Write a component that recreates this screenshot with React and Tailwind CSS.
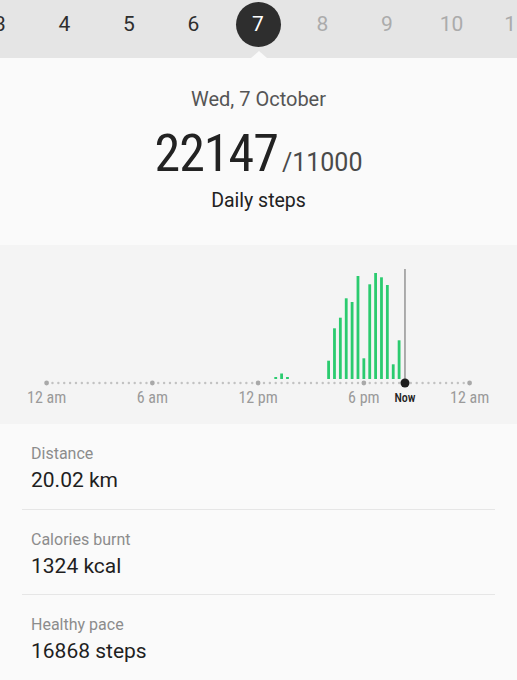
import React from "react";

const days = [3, 4, 5, 6, 7, 8, 9, 10, 11];
const today = 7;

// 20-minute slots, index -> top y of bar (chart coords, bottom = 134)
const bars = [
    [39, 132],
    [40, 128.5],
    [41, 132],
    [48, 115.7],
    [49, 83.3],
    [50, 72.7],
    [51, 53.3],
    [52, 57],
    [53, 31],
    [54, 113.3],
    [55, 39.3],
    [56, 28],
    [57, 32.3],
    [58, 40],
    [59, 119.3],
    [60, 95.3],
];

const slotX = (i) => 46.6 + i * 5.875;
const AXIS_Y = 138;
const NOW = 61;

const stats = [
    { label: "Distance", value: "20.02 km" },
    { label: "Calories burnt", value: "1324 kcal" },
    { label: "Healthy pace", value: "16868 steps" },
];

const axisLabels = [
    { i: 0, text: "12 am" },
    { i: 18, text: "6 am" },
    { i: 36, text: "12 pm" },
    { i: 54, text: "6 pm" },
    { i: 72, text: "12 am" },
];

const Chart = () => {
    const dots = [];
    for (let i = 0; i <= 72; i++) {
        if (i === NOW) continue;
        const major = i % 18 === 0;
        dots.push(
            <circle
                key={i}
                cx={slotX(i)}
                cy={AXIS_Y}
                r={major ? 2.4 : 1.2}
                fill={major ? "#a9a9a9" : "#c2c2c2"}
            />
        );
    }

    return (
        <svg width="517" height="179" viewBox="0 0 517 179">
            {bars.map(([i, top]) => (
                <rect
                    key={i}
                    x={slotX(i) - 1.4}
                    y={top}
                    width="2.8"
                    height={134 - top}
                    fill="#2bcb6f"
                />
            ))}
            {dots}
            <line x1={slotX(NOW)} y1="24" x2={slotX(NOW)} y2={AXIS_Y} stroke="#9a9a9a" strokeWidth="1.6" />
            <circle cx={slotX(NOW)} cy={AXIS_Y} r="4.5" fill="#1e1e1e" />
            {axisLabels.map((l, k) => (
                <text
                    key={k}
                    x={slotX(l.i)}
                    y="158"
                    textAnchor="middle"
                    fontSize="16"
                    fill="#9a9a9a"
                    style={{ fontFamily: "'Roboto Condensed', 'Liberation Sans Narrow', Roboto, sans-serif" }}
                >
                    {l.text}
                </text>
            ))}
            <text
                x={slotX(NOW)}
                y="156.5"
                textAnchor="middle"
                fontSize="12"
                fontWeight="500"
                fill="#222"
                style={{ fontFamily: "'Roboto Condensed', Roboto, sans-serif" }}
            >
                Now
            </text>
        </svg>
    );
};

const App = () => {
    return (
        <div className="w-[517px] h-[680px] overflow-hidden bg-[#fafafa] font-['Roboto',sans-serif]">
            {/* Day picker */}
            <div className="relative h-[58px] bg-[#e5e5e5] overflow-hidden">
                <div className="flex -ml-[32.25px] pt-[1.5px]">
                    {days.map((d) => (
                        <div key={d} className="w-[64.5px] shrink-0 flex justify-center">
                            {d === today ? (
                                <div className="w-[45px] h-[45px] rounded-full bg-[#2e2e2e] text-white flex items-center justify-center text-[21px] leading-none">
                                    {d}
                                </div>
                            ) : (
                                <div
                                    className={
                                        d < today
                                            ? "h-[45px] flex items-center text-[21px] leading-none text-[#2e2e2e]"
                                            : "h-[45px] flex items-center text-[21px] leading-none text-[#ababab]"
                                    }
                                >
                                    {d}
                                </div>
                            )}
                        </div>
                    ))}
                </div>
                <div className="absolute left-[251px] bottom-0 w-0 h-0 border-l-[8px] border-r-[8px] border-b-[7px] border-l-transparent border-r-transparent border-b-[#fafafa]"></div>
            </div>

            {/* Summary */}
            <div className="h-[187px] pt-[29px] text-center">
                <p className="text-[20px] leading-[24px] text-[#555]">Wed, 7 October</p>
                <div className="mt-[13px] h-[60px] flex justify-center items-baseline">
                    <span className="text-[52px] leading-[60px] text-[#222] tracking-[-1px] font-['Roboto_Condensed','Roboto',sans-serif]">
                        22147
                    </span>
                    <span className="ml-[4px] text-[25px] text-[#4a4a4a]">/11000</span>
                </div>
                <p className="mt-[5px] text-[19.5px] leading-[24px] text-[#222]">Daily steps</p>
            </div>

            {/* Chart */}
            <div className="h-[179px] bg-[#f4f4f4]">
                <Chart />
            </div>

            {/* Stats list */}
            <div className="px-[22px]">
                {stats.map((s) => (
                    <div key={s.label} className="pt-5 pb-[15.5px] pl-[9px] border-b border-[#e6e6e6]">
                        <p className="text-[16px] leading-[20px] text-[#8c8c8c]">{s.label}</p>
                        <p className="mt-[3px] text-[21px] leading-[26px] text-[#1f1f1f]">{s.value}</p>
                    </div>
                ))}
            </div>
        </div>
    );
};

export default App;
